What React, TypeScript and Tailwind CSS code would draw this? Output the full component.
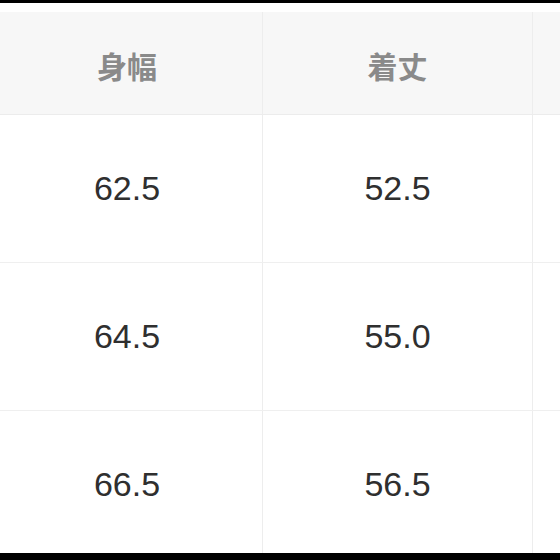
import React from "react";

const rows = [
  ["62.5", "52.5"],
  ["64.5", "55.0"],
  ["66.5", "56.5"],
];

const App = () => {
  return (
    <div className="w-[560px] h-[560px] bg-white overflow-hidden flex flex-col">
      {/* top black edge */}
      <div className="h-[3px] bg-black shrink-0"></div>
      <div className="h-[9px] bg-white shrink-0"></div>

      <div className="flex-1 overflow-hidden">
        <div className="ml-[-8px] w-[820px]">
          {/* Header */}
          <div className="grid grid-cols-[271px_270px_279px] h-[103px] bg-[#f7f7f7] border-b border-[#ececec]">
            <div className="flex items-center justify-center border-r border-[#ededed] text-[30px] font-bold text-[#8a8a8a] font-['Noto_Sans_CJK_JP',sans-serif] pt-[4px]">
              身幅
            </div>
            <div className="flex items-center justify-center border-r border-[#ededed] text-[30px] font-bold text-[#8a8a8a] font-['Noto_Sans_CJK_JP',sans-serif] pt-[4px]">
              着丈
            </div>
            <div></div>
          </div>

          {/* Body */}
          {rows.map((r, i) => (
            <div
              key={i}
              className="grid grid-cols-[271px_270px_279px] h-[148px] border-b border-[#efefef]"
            >
              <div className="flex items-center justify-center border-r border-[#ededed] text-[34px] text-[#2f2f2f] font-['Liberation_Sans',Arial,sans-serif]">
                {r[0]}
              </div>
              <div className="flex items-center justify-center border-r border-[#ededed] text-[34px] text-[#2f2f2f] font-['Liberation_Sans',Arial,sans-serif]">
                {r[1]}
              </div>
              <div></div>
            </div>
          ))}
        </div>
      </div>

      {/* bottom black edge */}
      <div className="h-[7px] bg-black shrink-0"></div>
    </div>
  );
};

export default App;
